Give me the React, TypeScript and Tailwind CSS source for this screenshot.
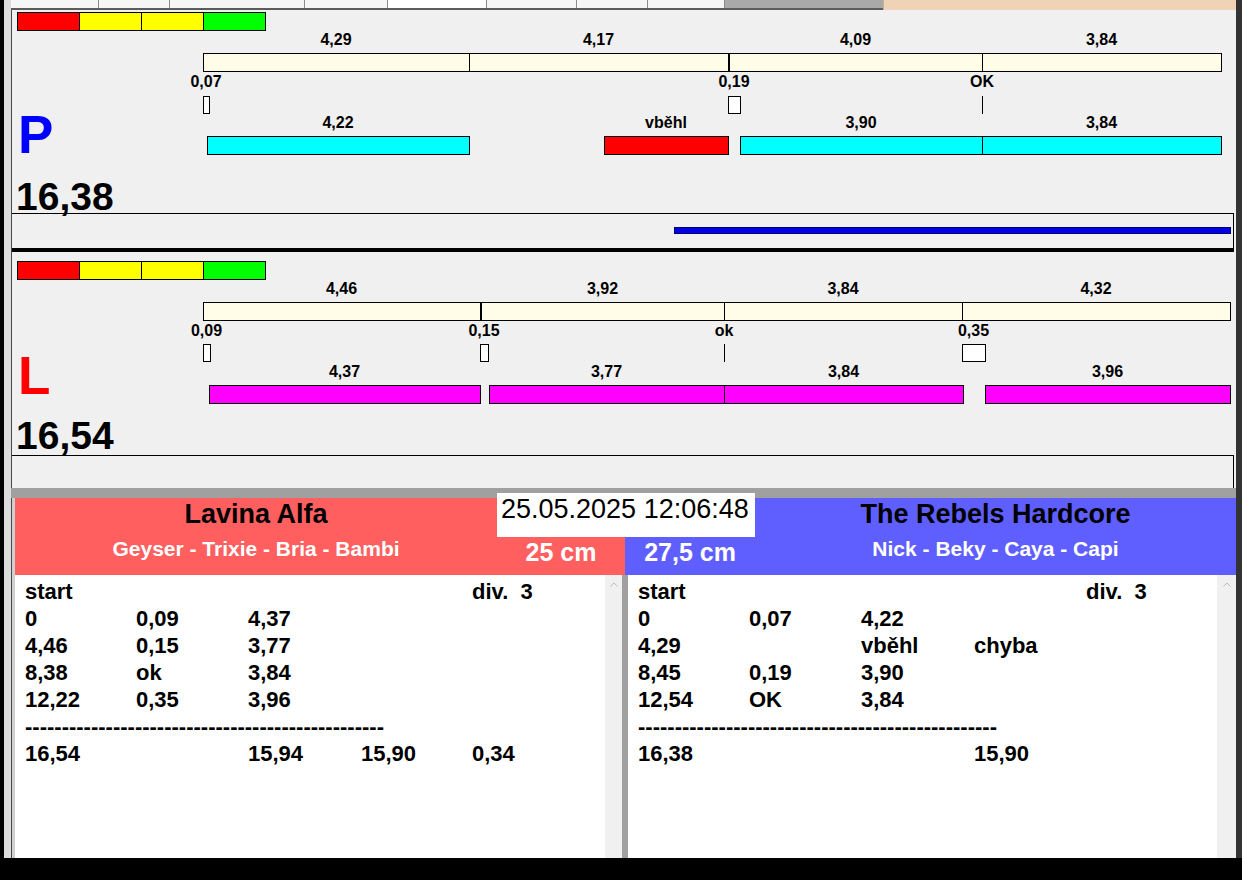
import React from 'react';

// page x of the chart canvas' left edge
const OX = 12;

type Bar = { x1: number; x2: number; label: string; fill: string };
type Gap = { x1: number; x2: number; label: string };

interface LaneLayout {
  colorTop: number;
  label1: number;
  bar1: number;
  gapLabel: number;
  marker: number;
  label2: number;
  bar2: number;
  letterTop: number;
  totalTop: number;
}

const CREAM = 'bg-[#fffde8]';
const CYAN = 'bg-[#00ffff]';
const RED = 'bg-[#ff0000]';
const MAGENTA = 'bg-[#ff00ff]';

const pLayout: LaneLayout = {
  colorTop: 2, label1: 30, bar1: 43, gapLabel: 72, marker: 86, label2: 113, bar2: 126, letterTop: 98, totalTop: 167,
};
const lLayout: LaneLayout = {
  colorTop: 9, label1: 37, bar1: 50, gapLabel: 79, marker: 92, label2: 120, bar2: 133, letterTop: 97, totalTop: 164,
};

const pTimes: Bar[] = [
  { x1: 203, x2: 469, label: '4,29', fill: CREAM },
  { x1: 469, x2: 728, label: '4,17', fill: CREAM },
  { x1: 729, x2: 982, label: '4,09', fill: CREAM },
  { x1: 982, x2: 1221, label: '3,84', fill: CREAM },
];
const pGaps: Gap[] = [
  { x1: 203, x2: 209, label: '0,07' },
  { x1: 728, x2: 740, label: '0,19' },
  { x1: 982, x2: 982, label: 'OK' },
];
const pRuns: Bar[] = [
  { x1: 207, x2: 469, label: '4,22', fill: CYAN },
  { x1: 604, x2: 728, label: 'vběhl', fill: RED },
  { x1: 740, x2: 982, label: '3,90', fill: CYAN },
  { x1: 982, x2: 1221, label: '3,84', fill: CYAN },
];

const lTimes: Bar[] = [
  { x1: 203, x2: 480, label: '4,46', fill: CREAM },
  { x1: 481, x2: 724, label: '3,92', fill: CREAM },
  { x1: 724, x2: 962, label: '3,84', fill: CREAM },
  { x1: 962, x2: 1230, label: '4,32', fill: CREAM },
];
const lGaps: Gap[] = [
  { x1: 203, x2: 210, label: '0,09' },
  { x1: 480, x2: 488, label: '0,15' },
  { x1: 724, x2: 724, label: 'ok' },
  { x1: 962, x2: 985, label: '0,35' },
];
const lRuns: Bar[] = [
  { x1: 209, x2: 480, label: '4,37', fill: MAGENTA },
  { x1: 489, x2: 724, label: '3,77', fill: MAGENTA },
  { x1: 724, x2: 963, label: '3,84', fill: MAGENTA },
  { x1: 985, x2: 1230, label: '3,96', fill: MAGENTA },
];

const Label = ({ cx, cy, text }: { cx: number; cy: number; text: string }) => (
  <div
    className="absolute w-[100px] text-center text-[16px] leading-[18px] font-bold whitespace-nowrap"
    style={{ left: cx - OX - 50, top: cy - 9 }}
  >
    {text}
  </div>
);

const BarRow = ({ bars, top, labelY }: { bars: Bar[]; top: number; labelY: number }) => (
  <>
    {bars.map((b, i) => (
      <React.Fragment key={i}>
        <Label cx={(b.x1 + b.x2) / 2} cy={labelY} text={b.label} />
        <div
          className={`absolute h-[19px] border border-black ${b.fill}`}
          style={{ left: b.x1 - OX, width: b.x2 - b.x1 + 1, top }}
        />
      </React.Fragment>
    ))}
  </>
);

interface LaneProps {
  layout: LaneLayout;
  letter: string;
  letterClass: string;
  total: string;
  times: Bar[];
  gaps: Gap[];
  runs: Bar[];
}

const Lane: React.FC<LaneProps> = ({ layout, letter, letterClass, total, times, gaps, runs }) => (
  <div className="relative h-[203px]">
    <div className="absolute left-[5px] flex h-[19px] border border-black" style={{ top: layout.colorTop }}>
      <div className="w-[61px] bg-[#ff0000]" />
      <div className="w-[62px] border-l border-black bg-[#ffff00]" />
      <div className="w-[62px] border-l border-black bg-[#ffff00]" />
      <div className="w-[62px] border-l border-black bg-[#00ff00]" />
    </div>

    <BarRow bars={times} top={layout.bar1} labelY={layout.label1} />

    {gaps.map((g, i) => (
      <React.Fragment key={i}>
        <Label cx={(g.x1 + g.x2) / 2} cy={layout.gapLabel} text={g.label} />
        {g.x1 === g.x2 ? (
          <div className="absolute h-[18px] w-px bg-black" style={{ left: g.x1 - OX, top: layout.marker }} />
        ) : (
          <div
            className="absolute h-[18px] border border-black bg-white"
            style={{ left: g.x1 - OX, width: g.x2 - g.x1 + 1, top: layout.marker }}
          />
        )}
      </React.Fragment>
    ))}

    <BarRow bars={runs} top={layout.bar2} labelY={layout.label2} />

    <div className={`absolute left-[6px] text-[53px] leading-[53px] font-bold ${letterClass}`} style={{ top: layout.letterTop }}>
      {letter}
    </div>
    <div className="absolute left-[4px] text-[39px] leading-[39px] font-bold" style={{ top: layout.totalTop }}>
      {total}
    </div>
  </div>
);

const COLS_L = ['w-[111px]', 'w-[112px]', 'w-[113px]', 'w-[111px]', 'w-[112px]'];
const COLS_R = ['w-[111px]', 'w-[112px]', 'w-[113px]', 'w-[112px]', 'w-[112px]'];
const DASHES = '-'.repeat(49);

const leftRows: string[][] = [
  ['start', '', '', '', 'div.  3'],
  ['0', '0,09', '4,37'],
  ['4,46', '0,15', '3,77'],
  ['8,38', 'ok', '3,84'],
  ['12,22', '0,35', '3,96'],
  [DASHES],
  ['16,54', '', '15,94', '15,90', '0,34'],
];
const rightRows: string[][] = [
  ['start', '', '', '', 'div.  3'],
  ['0', '0,07', '4,22'],
  ['4,29', '', 'vběhl', 'chyba'],
  ['8,45', '0,19', '3,90'],
  ['12,54', 'OK', '3,84'],
  [DASHES],
  ['16,38', '', '', '15,90'],
];

const Protocol = ({ rows, cols }: { rows: string[][]; cols: string[] }) => (
  <div className="pl-[10px] pt-[3px] text-[22px] leading-[27px] font-bold">
    {rows.map((r, i) =>
      r.length === 1 ? (
        <div key={i} className="h-[27px] whitespace-pre">{r[0]}</div>
      ) : (
        <div key={i} className="flex h-[27px]">
          {r.map((c, j) => (
            <div key={j} className={`${cols[j]} shrink-0 whitespace-pre`}>{c}</div>
          ))}
        </div>
      )
    )}
  </div>
);

const ScrollBar = ({ w }: { w: string }) => (
  <div className={`${w} bg-[#f0f0f0] flex justify-center pt-[7px]`}>
    <svg width="8" height="5" viewBox="0 0 8 5">
      <polyline points="0.5,4.5 4,1 7.5,4.5" fill="none" stroke="#bdbdbd" strokeWidth="1" />
    </svg>
  </div>
);

const tabs = ['w-[88px]', 'w-[71px]', 'w-[135px]', 'w-[83px]', 'w-[99px]', 'w-[90px]', 'w-[71px]', 'w-[77px]'];

export default function App() {
  return (
    <div className="w-[1242px] h-[880px] bg-black flex flex-col overflow-hidden font-['Liberation_Sans',Arial,sans-serif] text-black">
      <div className="flex h-[858px]">
        <div className="w-[4px] bg-black" />
        <div className="w-[7px] bg-[#dcdcdc]" />

        <div className="w-[1225px] flex flex-col bg-[#f0f0f0]">
          {/* tab strip */}
          <div className="flex h-[10px]">
            <div className="w-[872px] flex flex-col">
              <div className="flex h-[8px] bg-[#f6f6f6]">
                {tabs.map((t, i) => (
                  <div key={i} className={`${t} border-r border-[#8c8c8c] ${i === 4 ? 'bg-white' : ''}`} />
                ))}
                <div className="flex-1 bg-[#a9a9a9]" />
              </div>
              <div className="h-[2px] bg-[#5c5c5c]" />
            </div>
            <div className="flex-1 bg-[#f0d3b6] border-l border-[#c8b09a]" />
          </div>

          {/* P lane */}
          <div className="border-l border-[#4a4a4a]">
            <Lane layout={pLayout} letter="P" letterClass="text-[#0000ff]" total="16,38" times={pTimes} gaps={pGaps} runs={pRuns} />
            <div className="h-[35px] mr-[2px] border-t border-r border-black pt-[13px] pl-[662px]">
              <div className="h-[7px] w-[557px] bg-[#0000e6] border border-[#00006a]" />
            </div>
            <div className="h-[4px] mr-[2px] bg-black" />

            {/* L lane */}
            <Lane layout={lLayout} letter="L" letterClass="text-[#ff0000]" total="16,54" times={lTimes} gaps={lGaps} runs={lRuns} />
            <div className="h-[33px] mr-[2px] border-t border-r border-black" />
          </div>
          <div className="h-[10px] bg-[#a0a0a0]" />

          {/* teams */}
          <div className="relative flex-1 flex flex-col border-l border-[#4a4a4a] pl-[3px] bg-[#cfcfcf]">
            <div className="flex h-[77px]">
              <div className="w-[610px] flex bg-[#ff5f5f]">
                <div className="w-[482px] flex flex-col items-center">
                  <div className="h-[32px] leading-[32px] text-[27px] font-bold">Lavina Alfa</div>
                  <div className="h-[38px] leading-[38px] text-[21px] font-bold text-white">Geyser - Trixie - Bria - Bambi</div>
                </div>
                <div className="flex-1 flex flex-col items-center">
                  <div className="mt-[42px] leading-[24px] text-[25px] font-bold text-white">25 cm</div>
                </div>
              </div>
              <div className="flex-1 flex bg-[#5f5fff]">
                <div className="w-[130px] flex flex-col items-center">
                  <div className="mt-[42px] leading-[24px] text-[25px] font-bold text-white">27,5 cm</div>
                </div>
                <div className="flex-1 flex flex-col items-center">
                  <div className="h-[32px] leading-[32px] text-[27px] font-bold">The Rebels Hardcore</div>
                  <div className="h-[38px] leading-[38px] text-[21px] font-bold text-white">Nick - Beky - Caya - Capi</div>
                </div>
              </div>
            </div>

            <div className="absolute left-[485px] top-[-5px] w-[258px] h-[44px] bg-white pl-[4px] pt-[3px] text-[27px] leading-[27px] whitespace-nowrap">
              25.05.2025 12:06:48
            </div>

            <div className="flex flex-1">
              <div className="w-[590px] bg-white">
                <Protocol rows={leftRows} cols={COLS_L} />
              </div>
              <ScrollBar w="w-[17px]" />
              <div className="w-[6px] bg-[#a0a0a0]" />
              <div className="w-[589px] bg-white">
                <Protocol rows={rightRows} cols={COLS_R} />
              </div>
              <ScrollBar w="w-[19px]" />
            </div>
          </div>
        </div>

        <div className="w-[6px] bg-[#333333]" />
      </div>
      <div className="h-[22px] bg-black" />
    </div>
  );
}
